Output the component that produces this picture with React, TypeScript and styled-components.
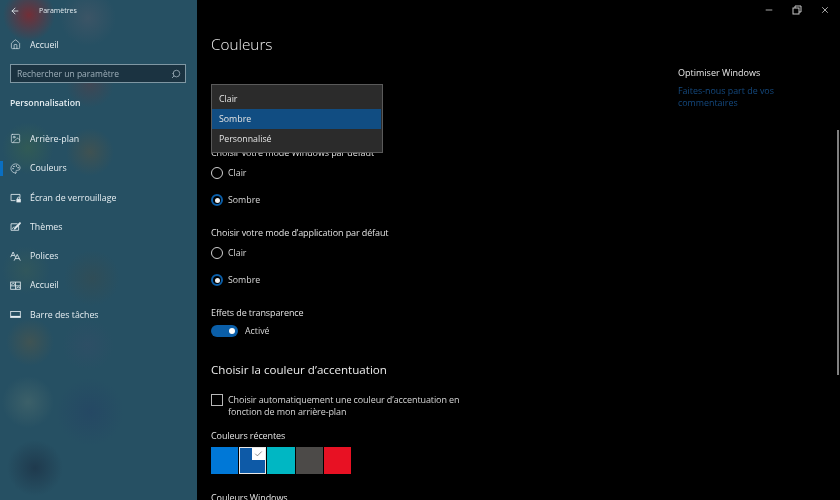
import React from "react";
import styled, { createGlobalStyle } from "styled-components";
import { Home, Image, Palette, Search, ArrowLeft, Minus, X, Check } from "lucide-react";

const GlobalStyle = createGlobalStyle`
  html, body {
    margin: 0;
    padding: 0;
    background: #000;
  }
  body {
    font-family: "Open Sans", "Noto Sans", sans-serif;
    color: #fff;
  }
`;

const Screen = styled.div`
  position: relative;
  display: flex;
  width: 840px;
  height: 500px;
  overflow: hidden;
  background: #000;
  filter: blur(0.35px);
`;

const Sidebar = styled.nav`
  width: 197px;
  flex-shrink: 0;
  display: flex;
  flex-direction: column;
  color: #e6eef2;
  background-color: #265063;
  background-image:
    radial-gradient(circle 26px at 29px 15px, rgba(140, 35, 40, 0.75), transparent),
    radial-gradient(circle 28px at 88px 18px, rgba(85, 90, 105, 0.45), transparent),
    radial-gradient(circle 24px at 90px 84px, rgba(120, 50, 50, 0.3), transparent),
    radial-gradient(circle 26px at 28px 148px, rgba(70, 110, 60, 0.35), transparent),
    radial-gradient(circle 24px at 90px 152px, rgba(110, 85, 50, 0.35), transparent),
    radial-gradient(circle 24px at 26px 270px, rgba(80, 105, 70, 0.25), transparent),
    radial-gradient(circle 28px at 92px 278px, rgba(70, 70, 60, 0.3), transparent),
    radial-gradient(circle 24px at 30px 342px, rgba(110, 90, 55, 0.35), transparent),
    radial-gradient(circle 26px at 88px 345px, rgba(60, 75, 105, 0.3), transparent),
    radial-gradient(circle 26px at 28px 402px, rgba(100, 125, 115, 0.35), transparent),
    radial-gradient(circle 34px at 90px 412px, rgba(35, 60, 100, 0.4), transparent),
    radial-gradient(circle 28px at 35px 468px, rgba(25, 40, 60, 0.55), transparent);
`;

const TitleBar = styled.div`
  height: 21px;
  display: flex;
  align-items: center;
  gap: 19px;
  padding-left: 10px;
  font-size: 7px;
`;

const NavList = styled.div`
  display: flex;
  flex-direction: column;
`;

const NavRow = styled.div<{ $active?: boolean }>`
  position: relative;
  height: 29.3px;
  display: flex;
  align-items: center;
  gap: 9px;
  padding-left: 10px;
  font-size: 8.8px;

  &::before {
    content: "";
    display: ${(p) => (p.$active ? "block" : "none")};
    position: absolute;
    left: 0;
    top: 7px;
    width: 3px;
    height: 15px;
    background: #0a6fc2;
  }

  svg {
    flex-shrink: 0;
    width: 11px;
    height: 11px;
  }
`;

const HomeRow = styled(NavRow)`
  margin-top: 9px;
`;

const SearchBox = styled.div`
  margin: 5px 11px 0 10px;
  height: 19px;
  box-sizing: border-box;
  border: 1px solid #7f97a3;
  background: #1b3341;
  display: flex;
  align-items: center;
  justify-content: space-between;
  padding: 0 4px 0 6px;
  font-size: 8.5px;
  color: #9fb0ba;
`;

const GroupTitle = styled.div`
  margin: 13px 0 14px 10px;
  font-size: 8.7px;
  font-weight: 600;
  line-height: 14px;
`;

const Main = styled.main`
  flex: 1;
  display: flex;
  flex-direction: column;
`;

const WindowBar = styled.div`
  height: 20px;
  flex-shrink: 0;
  display: flex;
  justify-content: flex-end;
  align-items: center;
  gap: 18px;
  padding-right: 10px;
  color: #c8c8c8;

  svg {
    width: 10px;
    height: 10px;
  }
`;

const Columns = styled.div`
  display: flex;
  padding-left: 14px;
`;

const Content = styled.div`
  width: 467px;
  flex-shrink: 0;
  display: flex;
  flex-direction: column;
  align-items: flex-start;
`;

const PageTitle = styled.h1`
  margin: 12px 0 0;
  font-size: 15.3px;
  font-weight: 300;
  line-height: 24px;
  color: #f2f2f2;
`;

const Label = styled.div<{ $top: number }>`
  margin-top: ${(p) => p.$top}px;
  font-size: 9px;
  letter-spacing: -0.1px;
  line-height: 14px;
  color: #e2e2e2;
`;

const OptionRow = styled.div<{ $top: number }>`
  margin-top: ${(p) => p.$top}px;
  height: 14px;
  display: flex;
  align-items: center;
  gap: 5px;
  font-size: 8.8px;
  color: #d8d8d8;
`;

const Radio = styled.span<{ $on?: boolean }>`
  width: 12px;
  height: 12px;
  box-sizing: border-box;
  border-radius: 50%;
  border: ${(p) => (p.$on ? "2px solid #0a5ea8" : "1.5px solid #d0d0d0")};
  display: flex;
  align-items: center;
  justify-content: center;

  &::after {
    content: "";
    display: ${(p) => (p.$on ? "block" : "none")};
    width: 5px;
    height: 5px;
    border-radius: 50%;
    background: #f0f0f0;
  }
`;

const Toggle = styled.span`
  width: 27px;
  height: 12px;
  border-radius: 6px;
  background: #0a5ea8;
  display: flex;
  align-items: center;
  justify-content: flex-end;
  padding-right: 3px;
  box-sizing: border-box;

  &::after {
    content: "";
    width: 6px;
    height: 6px;
    border-radius: 50%;
    background: #fff;
  }
`;

const ToggleRow = styled(OptionRow)`
  gap: 7px;
`;

const SectionTitle = styled.h2`
  margin: 23px 0 0;
  font-size: 11.6px;
  font-weight: 400;
  line-height: 18px;
  color: #ececec;
`;

const CheckRow = styled.div`
  margin-top: 15px;
  display: flex;
  gap: 5px;
  font-size: 9px;
  letter-spacing: -0.1px;
  line-height: 12px;
  color: #d8d8d8;
`;

const CheckBox = styled.span`
  width: 12px;
  height: 12px;
  flex-shrink: 0;
  box-sizing: border-box;
  border: 1.5px solid #b8b8b8;
`;

const CheckText = styled.span`
  width: 250px;
`;

const Swatches = styled.div`
  margin-top: 4px;
  display: flex;
  gap: 1px;
`;

const Swatch = styled.div<{ $color: string; $selected?: boolean }>`
  position: relative;
  width: 27.2px;
  height: 27px;
  box-sizing: border-box;
  background: ${(p) => p.$color};
  border: ${(p) => (p.$selected ? "1px solid #e8e8e8" : "none")};

  svg {
    position: absolute;
    top: 0;
    right: 0;
    width: 13px;
    height: 12px;
    padding: 1px 2px;
    box-sizing: border-box;
    background: #fff;
    color: #666;
  }
`;

const Aside = styled.aside`
  margin-top: 46px;
  width: 130px;
`;

const AsideTitle = styled.div`
  font-size: 9px;
  line-height: 14px;
  color: #e8e8e8;
`;

const FeedbackLink = styled.a`
  display: block;
  margin-top: 5px;
  font-size: 8.9px;
  line-height: 12px;
  color: #14497f;
`;

const Dropdown = styled.div`
  position: absolute;
  left: 211px;
  top: 84px;
  width: 172px;
  height: 69px;
  box-sizing: border-box;
  border: 1px solid #5a5a5a;
  background: #2b2b2b;
  padding-top: 4px;
`;

const DropdownItem = styled.div<{ $selected?: boolean }>`
  height: 20px;
  margin-right: 1px;
  display: flex;
  align-items: center;
  padding-left: 7px;
  font-size: 8.8px;
  color: #e4e4e4;
  background: ${(p) => (p.$selected ? "#114d82" : "transparent")};
`;

const Scrollbar = styled.div`
  position: absolute;
  right: 1px;
  top: 130px;
  width: 2px;
  height: 245px;
  background: #808080;
`;

const LockIcon = () => (
  <svg viewBox="0 0 16 16" fill="none" stroke="currentColor" strokeWidth="1.2">
    <path d="M8 12.5H1.5v-9h13v5" />
    <rect x="10" y="10.5" width="5" height="4" fill="currentColor" />
    <path d="M11 10.5V9a1.5 1.5 0 0 1 3 0v1.5" />
  </svg>
);

const ThemeIcon = () => (
  <svg viewBox="0 0 16 16" fill="none" stroke="currentColor" strokeWidth="1.2">
    <path d="M11 4H1.5v9.5h11V7" />
    <path d="M14.5 2 7 9.5 6 12l2.5-1L15.5 3.5z" fill="currentColor" />
    <path d="M3 11.5 6 8" />
  </svg>
);

const FontIcon = () => (
  <svg viewBox="0 0 16 16" fill="none" stroke="currentColor" strokeWidth="1.2">
    <path d="M1 9 4.5 1.5 8 9" />
    <path d="M6 14 10.5 5 15 14" />
    <path d="M7.5 11h6M2.5 6.5h4" />
  </svg>
);

const StartIcon = () => (
  <svg viewBox="0 0 16 16" fill="none" stroke="currentColor" strokeWidth="1.2">
    <rect x="1" y="3" width="14" height="10.5" />
    <path d="M1 8.5h14M8 3v10.5" />
    <path d="M2 7l3-2.5 2 2.5M9 12l3-2 3 2" />
  </svg>
);

const TaskbarIcon = () => (
  <svg viewBox="0 0 16 16" fill="none" stroke="currentColor" strokeWidth="1.2">
    <rect x="1" y="3.5" width="14" height="9" />
    <path d="M1 11h14" strokeWidth="2" />
  </svg>
);

const RestoreIcon = () => (
  <svg viewBox="0 0 10 10" fill="none" stroke="currentColor" strokeWidth="1">
    <rect x="1" y="3" width="6" height="6" />
    <path d="M3 3V1h6v6H7" />
  </svg>
);

const navItems = [
  { label: "Arrière-plan", icon: <Image strokeWidth={1.4} /> },
  { label: "Couleurs", icon: <Palette strokeWidth={1.4} />, active: true },
  { label: "Écran de verrouillage", icon: <LockIcon /> },
  { label: "Thèmes", icon: <ThemeIcon /> },
  { label: "Polices", icon: <FontIcon /> },
  { label: "Accueil", icon: <StartIcon /> },
  { label: "Barre des tâches", icon: <TaskbarIcon /> },
];

const recentColors = ["#0078d7", "#0e5aa7", "#00b7c3", "#4c4a48", "#e81123"];

export default function App() {
  return (
    <Screen>
      <GlobalStyle />
      <Sidebar>
        <TitleBar>
          <ArrowLeft size={10} />
          <span>Paramètres</span>
        </TitleBar>
        <HomeRow>
          <Home strokeWidth={1.4} />
          Accueil
        </HomeRow>
        <SearchBox>
          Rechercher un paramètre
          <Search size={10} style={{ transform: "scaleX(-1)" }} />
        </SearchBox>
        <GroupTitle>Personnalisation</GroupTitle>
        <NavList>
          {navItems.map((item) => (
            <NavRow key={item.label} $active={item.active}>
              {item.icon}
              {item.label}
            </NavRow>
          ))}
        </NavList>
      </Sidebar>
      <Main>
        <WindowBar>
          <Minus />
          <RestoreIcon />
          <X />
        </WindowBar>
        <Columns>
          <Content>
            <PageTitle>Couleurs</PageTitle>
            <Label $top={90}>Choisir votre mode Windows par défaut</Label>
            <OptionRow $top={6}>
              <Radio />
              Clair
            </OptionRow>
            <OptionRow $top={13}>
              <Radio $on />
              Sombre
            </OptionRow>
            <Label $top={19}>Choisir votre mode d’application par défaut</Label>
            <OptionRow $top={6}>
              <Radio />
              Clair
            </OptionRow>
            <OptionRow $top={13}>
              <Radio $on />
              Sombre
            </OptionRow>
            <Label $top={19}>Effets de transparence</Label>
            <ToggleRow $top={4}>
              <Toggle />
              Activé
            </ToggleRow>
            <SectionTitle>Choisir la couleur d’accentuation</SectionTitle>
            <CheckRow>
              <CheckBox />
              <CheckText>
                Choisir automatiquement une couleur d’accentuation en fonction de mon
                arrière-plan
              </CheckText>
            </CheckRow>
            <Label $top={11}>Couleurs récentes</Label>
            <Swatches>
              {recentColors.map((color, i) => (
                <Swatch key={color} $color={color} $selected={i === 1}>
                  {i === 1 && <Check strokeWidth={2} />}
                </Swatch>
              ))}
            </Swatches>
            <Label $top={17}>Couleurs Windows</Label>
          </Content>
          <Aside>
            <AsideTitle>Optimiser Windows</AsideTitle>
            <FeedbackLink>Faites-nous part de vos commentaires</FeedbackLink>
          </Aside>
        </Columns>
      </Main>
      <Dropdown>
        <DropdownItem>Clair</DropdownItem>
        <DropdownItem $selected>Sombre</DropdownItem>
        <DropdownItem>Personnalisé</DropdownItem>
      </Dropdown>
      <Scrollbar />
    </Screen>
  );
}
